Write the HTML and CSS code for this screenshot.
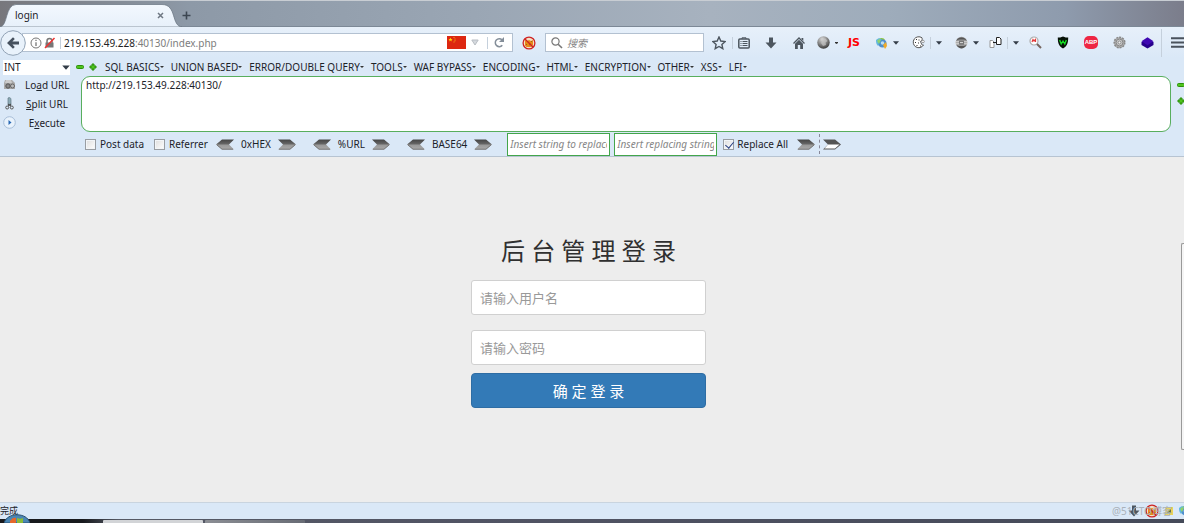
FILE: index.html
```html
<!DOCTYPE html>
<html lang="zh-CN">
<head>
<meta charset="utf-8">
<title>login</title>
<link rel="stylesheet" href="styles.css">
</head>
<body>
<svg class="defs" width="0" height="0" aria-hidden="true">
  <defs>
    <linearGradient id="metal" x1="0" y1="0" x2="0" y2="1"><stop offset="0" stop-color="#444"/><stop offset=".45" stop-color="#666"/><stop offset=".55" stop-color="#999"/><stop offset="1" stop-color="#aaa"/></linearGradient>
    <radialGradient id="ball" cx=".4" cy=".25" r=".8"><stop offset="0" stop-color="#ddd"/><stop offset=".5" stop-color="#888"/><stop offset="1" stop-color="#333"/></radialGradient>
    <linearGradient id="tabfill" x1="0" y1="0" x2="0" y2="1"><stop offset="0" stop-color="#f3f8fe"/><stop offset="1" stop-color="#e7f0fa"/></linearGradient>
    <symbol id="arrow-right" viewBox="0 0 18 11"><path d="M0 .5h12l6 5-6 5H0l5-5z" fill="url(#metal)"/><path d="M1 10.2h11l5-4.2" stroke="#777" fill="none"/></symbol>
    <symbol id="arrow-left" viewBox="0 0 18 11"><path d="M18 .5H6L0 5.500l6 5h12l-5-5z" fill="url(#metal)"/><path d="M17 10.200H6L1 6" stroke="#777" fill="none"/></symbol>
    <symbol id="arrow-hollow" viewBox="0 0 18 11"><path d="M0 .5h12l6 5-6 5H0l5-5z" fill="#555"/><path d="M5 5.500h11.500l-4.500 4H1.500z" fill="#fff"/></symbol>
    <symbol id="minus" viewBox="0 0 8 8"><rect x=".5" y="2.500" width="7" height="3" rx="1" fill="#4fc51d" stroke="#2c8f0c"/></symbol>
    <symbol id="plus" viewBox="0 0 8 8"><path d="M3 1h2v2h2v2H5v2H3V5H1V3h2z" fill="#4fc51d" stroke="#2c8f0c" stroke-linejoin="round"/></symbol>
    <symbol id="caret" viewBox="0 0 6 4"><path d="M0 .3h6L3 3.800z" fill="#333c47"/></symbol>
    <symbol id="blocked" viewBox="0 0 14 14"><circle cx="7" cy="7" r="5.700" fill="#f5dfc4"/><path d="M3 4l2 1 2-1 2 1 2-1v5l-1.500 2h-5L3 9.500z" fill="#e78a17"/><path d="M4 8l1 1M9 5l1 1M7 9l2-1" stroke="#a0601a"/><circle cx="7" cy="7" r="5.900" fill="none" stroke="#cf2222" stroke-width="1.300"/><path d="M3 3l8 8" stroke="#cf2222" stroke-width="1.300"/></symbol>
    <symbol id="download" viewBox="0 0 12 12"><path d="M4 .5h4v5h3.500L6 11.500.5 5.500H4z" fill="#4d565f"/></symbol>
    <symbol id="swirl" viewBox="0 0 12 12"><path d="M1 5c1-5 7-5 8-2L7 5C5 3 4 5 4 7z" fill="#8dc63a"/><path d="M0 3c3-3 5-2 7 1L2 9C0 7 0 5 0 3z" fill="#63b8df"/><circle cx="6.500" cy="6.500" r="4" fill="#4f8fce"/><circle cx="6.500" cy="6" r="1.800" fill="#b8dcef"/><path d="M7 8l3-3 1 4-2 3z" fill="#f1aa28"/><path d="M1 4l2-2 2 1-2 4z" fill="#8fd26d"/></symbol>
  </defs>
</svg>

<header class="tabstrip">
  <div class="tab">
    <svg class="tab-shape" viewBox="0 0 182 23" preserveAspectRatio="none" aria-hidden="true"><path d="M0 23C8 22 5 1 16 .5h146C177 .5 171 22 182 23z" fill="url(#tabfill)" stroke="#67727f" stroke-width=".7"/></svg>
    <span class="tab-title">login</span>
    <button class="plain tab-close" aria-label="Close tab"><svg width="7" height="7" viewBox="0 0 7 7"><path d="M1 1l5 5M6 1L1 6" stroke="#6f7883" stroke-width="1.500"/></svg></button>
  </div>
  <button class="plain new-tab" aria-label="New tab"><svg width="9" height="9" viewBox="0 0 9 9"><path d="M4.500.5v8M.5 4.500h8" stroke="#3c4651" stroke-width="1.600"/></svg></button>
</header>

<nav class="navbar" aria-label="Navigation">
  <button class="plain back" aria-label="Back"><svg width="26" height="26" viewBox="0 0 26 26"><circle cx="13" cy="13" r="12.300" fill="#e9f2fb" stroke="#92a3b6"/><path d="M7 13l6-5.800 1.800 1.800-2.400 2.500H19v3h-6.600l2.400 2.500-1.800 1.800z" fill="#46515e"/></svg></button>
  <div class="urlbar">
    <svg width="12" height="12" viewBox="0 0 12 12"><circle cx="6" cy="6" r="5" fill="none" stroke="#777"/><path d="M6 5.200V9M6 2.800v1.300" stroke="#777" stroke-width="1.300"/></svg>
    <svg width="12" height="12" viewBox="0 0 12 12"><path d="M3 6V4a2.500 2.500 0 015 0v2" fill="none" stroke="#777" stroke-width="1.500"/><rect x="1.500" y="5.500" width="8" height="5" fill="#777"/><path d="M1 11L10.500 1" stroke="#e33" stroke-width="1.500"/></svg>
    <span class="rule"></span>
    <span class="address" role="textbox" aria-label="Address">219.153.49.228<span class="dim">:40130/index.php</span></span>
    <svg width="19" height="13" viewBox="0 0 19 13"><path fill="#dd2710" d="M0 0h19v13H0z"/><path d="M3.500 1.500l.6 1.500h1.500l-1.200 1 .5 1.500-1.400-.9-1.400.9.5-1.500-1.200-1H3z" fill="#fd0"/><path d="M6.500 1h1v1h-1zM7.500 2.500h1v1h-1zM7.500 4.200h1v1h-1zM6.500 5.500h1v1h-1z" fill="#f7a51b"/></svg>
    <svg class="fade-caret" width="8" height="7" viewBox="0 0 8 7"><path d="M.8 1h6.400L4 6z" fill="#d5d9de" stroke="#b8bdc3"/></svg>
    <span class="rule"></span>
    <button class="plain reload" aria-label="Reload"><svg width="11" height="11" viewBox="0 0 11 11"><path d="M8.300 8.300A4 4 0 118 2.700" fill="none" stroke="#848e99" stroke-width="1.500"/><path d="M10 0v5H5z" fill="#848e99"/></svg></button>
  </div>
  <button class="plain blocker" aria-label="Blocked"><svg width="14" height="14"><use href="#blocked"/></svg></button>
  <label class="search">
    <svg width="12" height="12" viewBox="0 0 12 12"><circle cx="4.500" cy="4.500" r="3.600" fill="none" stroke="#777" stroke-width="1.200"/><path d="M7.200 7.200L11 11" stroke="#777" stroke-width="1.600"/></svg>
    <input type="text" placeholder="搜索" aria-label="搜索">
  </label>
  <div class="tools">
    <button class="plain cell short" aria-label="Bookmark"><svg width="14" height="14" viewBox="0 0 14 14"><path d="M7 1l1.800 4 4.300.5-3.200 2.900.9 4.300L7 10.500l-3.800 2.200.9-4.300L.9 5.500 5.200 5z" fill="none" stroke="#4d565f" stroke-width="1.400"/></svg></button>
    <span class="rule"></span>
    <button class="plain cell list" aria-label="Bookmarks list"><svg width="12" height="12" viewBox="0 0 12 12"><path d="M4 2V.8h4V2" fill="none" stroke="#4d565f"/><rect x=".8" y="2" width="10.400" height="9" rx="1" fill="none" stroke="#4d565f" stroke-width="1.500"/><path d="M2.500 4.500h1M4.500 4.500h5M2.500 6.500h1M4.500 6.500h5M2.500 8.500h1M4.500 8.500h5" stroke="#4d565f"/></svg></button>
    <button class="plain cell" aria-label="Downloads"><svg width="12" height="12"><use href="#download"/></svg></button>
    <button class="plain cell" aria-label="Home"><svg width="12" height="12" viewBox="0 0 12 12"><path d="M.5 6.500L6 1l5.500 5.500" fill="none" stroke="#4d565f" stroke-width="1.300"/><path d="M8.500 1h1.800v3l-1.800-1.700zM2 6.800l4-4 4 4V12H7.200V8H4.800v4H2z" fill="#4d565f"/></svg></button>
    <button class="plain cell" aria-label="Proxy"><svg width="13" height="13" viewBox="0 0 13 13"><circle cx="6.500" cy="6.500" r="6.200" fill="url(#ball)"/><path d="M3.500 3l2 1.500L4 7l2 3 3-1-.5-2.500L10.500 5 8.500 2.500z" fill="#c4c4c4" opacity=".7"/></svg><svg width="3" height="2" viewBox="0 0 3 2"><path d="M0 0h3v1L1.500 2 0 1z" fill="#333"/></svg></button>
    <button class="plain cell short js">JS</button>
    <button class="plain cell wide" aria-label="Profiles"><svg width="12" height="12"><use href="#swirl"/></svg><svg width="6" height="4"><use href="#caret"/></svg></button>
    <button class="plain cell wide" aria-label="Cookies"><svg width="13" height="13" viewBox="0 0 13 13"><path d="M10 1.800A5.500 5.500 0 1011.500 9c-2 0-2.500-1-2-2-1.500-.5-1.300-2 0-2.300.7-.5.900-1.700.5-2.900z" fill="#fff" stroke="#555"/><path d="M4 3h1v1H4zM6.500 3.500h1v1h-1zM3 6h1v1H3zM6 6.500h1v1H6zM4.500 9h1v1h-1zM8 9.500h1v1H8z" fill="#333"/><circle cx="11" cy="5.500" r="1.300" fill="#fff" stroke="#666" stroke-width=".6"/></svg><span class="rule"></span><svg width="6" height="4"><use href="#caret"/></svg></button>
    <button class="plain cell wide" aria-label="User agent"><svg width="13" height="13" viewBox="0 0 13 13"><circle cx="6.500" cy="6.500" r="5.800" fill="#999"/><path d="M1.500 4.500C3 .5 10 .5 11.500 4.500L9 3.500H4zM1.500 9C4 13.500 9 13.500 11.500 9L9 10H4z" fill="#555"/><path d="M0 5.800h13M0 7.800h13" stroke="#ddd"/><path d="M4 4.700h5v4H4z" fill="#777"/><path d="M5 6.600h3" stroke="#ddd"/></svg><svg width="6" height="4"><use href="#caret"/></svg></button>
    <button class="plain cell trio" aria-label="Compare"><svg width="13" height="13" viewBox="0 0 13 13"><path d="M1 4.500h2.500l1.500 1.500v5.500H1z" fill="#fff" stroke="#999"/><path d="M7.500 1.500h3L12 3v5.500H7.500z" fill="#fff" stroke="#222"/><path d="M4 6.500h4" stroke="#222"/></svg><span class="rule"></span><svg width="6" height="4"><use href="#caret"/></svg></button>
    <button class="plain cell" aria-label="Inspect"><svg width="13" height="13" viewBox="0 0 13 13"><circle cx="5" cy="5" r="4" fill="#fff" stroke="#aaa" stroke-width="1.200"/><path d="M3 6l1-2.500L5 5l1.500-1.500L6.500 6" fill="none" stroke="#e23b3b" stroke-width="1.200"/><path d="M8 8l4 4" stroke="#75655e" stroke-width="2"/></svg></button>
    <button class="plain cell" aria-label="Shield"><svg width="12" height="13" viewBox="0 0 12 13"><path d="M6 .5c2 1 3.500 1 5.200 1 0 5-.8 8.500-5.200 11C1.600 10 .8 6.500.8 1.500 2.500 1.500 4 1.500 6 .5z" fill="#071207"/><path d="M2.700 4l1.500 4L6 5l1.800 3 1.500-4" fill="none" stroke="#15db24" stroke-width="1.400"/></svg></button>
    <button class="plain cell abp"><span>ABP</span></button>
    <button class="plain cell" aria-label="Settings"><svg width="13" height="13" viewBox="0 0 13 13"><circle cx="6.500" cy="6.500" r="5.300" fill="#aaa" stroke="#888" stroke-width="1.500" stroke-dasharray="2 1"/><circle cx="6.500" cy="6.500" r="3.400" fill="#ccc" stroke="#888"/><circle cx="6.500" cy="6.500" r="1.500" fill="#eee" stroke="#888"/></svg></button>
    <button class="plain cell" aria-label="Layers"><svg width="13" height="12" viewBox="0 0 13 12"><path d="M.5 5h12v3L6.500 11.500.5 8z" fill="#26008c"/><path d="M6.500.3l6 4-6 4-6-4z" fill="#3f08b2"/></svg></button>
    <span class="rule tall"></span>
    <button class="plain menu-button" aria-label="Menu"><svg width="13" height="11" viewBox="0 0 13 11"><path d="M0 1.200h13M0 5.500h13M0 9.800h13" stroke="#4a525c" stroke-width="2"/></svg></button>
  </div>
</nav>

<section class="hackbar" aria-label="HackBar">
  <div class="menus">
    <div class="type"><select aria-label="Type"><option>INT</option></select><svg width="8" height="5"><use href="#caret"/></svg></div>
    <button class="plain step" aria-label="Less"><svg width="8" height="8"><use href="#minus"/></svg></button>
    <button class="plain step" aria-label="More"><svg width="8" height="8"><use href="#plus"/></svg></button>
    <div class="menu-list">
      <button class="plain">SQL BASICS</button><button class="plain">UNION BASED</button><button class="plain">ERROR/DOUBLE QUERY</button><button class="plain">TOOLS</button><button class="plain">WAF BYPASS</button><button class="plain">ENCODING</button><button class="plain">HTML</button><button class="plain">ENCRYPTION</button><button class="plain">OTHER</button><button class="plain">XSS</button><button class="plain">LFI</button>
    </div>
  </div>
  <div class="editor">
    <div class="actions">
      <button class="plain"><svg width="13" height="13" viewBox="0 0 13 13"><path d="M2 2h7l3 3v6H1V5z" fill="#aaa"/><path d="M3 2h5l1 3H2z" fill="#ccc"/><circle cx="5" cy="8" r="2.200" fill="#888" stroke="#555"/><circle cx="9.500" cy="8" r="2" fill="#bbb" stroke="#666"/></svg><span>Lo<u>a</u>d URL</span></button>
      <button class="plain"><svg width="13" height="13" viewBox="0 0 13 13"><path d="M5 1c2-1 3 0 3 2v5H5z" fill="#8caab5" stroke="#627a85" stroke-width=".7"/><path d="M5 7l3 2M8 7L5 9" stroke="#444"/><circle cx="4.200" cy="10.500" r="1.500" fill="none" stroke="#555"/><circle cx="8.800" cy="10.500" r="1.500" fill="none" stroke="#555"/></svg><span><u>S</u>plit URL</span></button>
      <button class="plain"><svg width="13" height="13" viewBox="0 0 13 13"><circle cx="6.500" cy="6.500" r="5.800" fill="#e8f2fc" stroke="#a7bdd7"/><path d="M5.500 4l3 2.500-3 2.500z" fill="#2869b5"/></svg><span>E<u>x</u>ecute</span></button>
    </div>
    <textarea aria-label="URL" spellcheck="false">http://219.153.49.228:40130/</textarea>
    <div class="side">
      <svg width="8" height="8"><use href="#minus"/></svg>
      <svg width="8" height="8"><use href="#plus"/></svg>
    </div>
  </div>
  <div class="options">
    <label class="check post"><input type="checkbox"><span>Post data</span></label>
    <label class="check referrer"><input type="checkbox"><span>Referrer</span></label>
    <div class="codec"><svg width="18" height="11"><use href="#arrow-left"/></svg><span>0xHEX</span><svg width="18" height="11"><use href="#arrow-right"/></svg></div>
    <div class="codec"><svg width="18" height="11"><use href="#arrow-left"/></svg><span>%URL</span><svg width="18" height="11"><use href="#arrow-right"/></svg></div>
    <div class="codec"><svg width="18" height="11"><use href="#arrow-left"/></svg><span>BASE64</span><svg width="18" height="11"><use href="#arrow-right"/></svg></div>
    <div class="replace">
      <input type="text" placeholder="Insert string to replace" aria-label="Insert string to replace">
      <input type="text" placeholder="Insert replacing string" aria-label="Insert replacing string">
    </div>
    <label class="check all"><input type="checkbox" checked><span>Replace All</span></label>
    <svg width="18" height="11"><use href="#arrow-right"/></svg>
    <span class="dashes"></span>
    <svg width="18" height="11"><use href="#arrow-hollow"/></svg>
  </div>
</section>

<main class="page">
  <form class="login">
    <h1>后 台 管 理 登 录</h1>
    <input type="text" placeholder="请输入用户名" aria-label="请输入用户名">
    <input type="password" placeholder="请输入密码" aria-label="请输入密码">
    <button type="button">确 定 登 录</button>
  </form>
  <span class="scroll-thumb"></span>
</main>

<footer>
  <div class="status">
    <span class="state">完成</span>
    <div class="addons">
      <span class="watermark">@51CTO博客</span>
      <svg width="12" height="12"><use href="#download"/></svg>
      <svg width="14" height="14"><use href="#blocked"/></svg>
      <svg width="10" height="10" viewBox="0 0 10 10"><path d="M1 1h8v8H1z" fill="#ead25c"/><path d="M3 7l4-4v4z" fill="#66724a"/></svg>
      <svg class="edge" width="12" height="12"><use href="#swirl"/></svg>
    </div>
  </div>
  <div class="taskbar">
    <svg class="orb" width="26" height="9" viewBox="0 0 26 9" aria-hidden="true"><path d="M0 9C3-2 23-2 26 9z" fill="#4a86b4" stroke="#284f70"/><path d="M6 7c2-3 4-4 6-3v5H6z" fill="#e5672a"/><path d="M13 4c3 1 4 1 6 0v5h-6z" fill="#8bbb38"/></svg>
    <span class="task light"></span><span class="task"></span>
  </div>
</footer>
</body>
</html>
```
FILE: styles.css
```css
* { box-sizing: border-box; }
body {
  margin: 0;
  min-height: 100vh;
  display: flex;
  flex-direction: column;
  overflow: hidden;
  background: #ededed;
  color: #1c2229;
  font: 10px/14px "Noto Sans", "Noto Sans CJK SC", sans-serif;
}
svg { flex: none; display: block; }
.defs { position: absolute; }
button, input, select, textarea { font: inherit; color: inherit; margin: 0; }
.plain { border: 0; padding: 0; background: none; white-space: nowrap; }
.rule { flex: none; width: 1px; height: 12px; background: #c5d0dc; }

/* Tabs */
.tabstrip {
  display: flex;
  align-items: flex-end;
  height: 27px;
  border-bottom: 1px solid #7c8896;
  background: linear-gradient(to right, #77777c 0, #8d99a7 16%, #9aa6b4 40%, #a7b2bf 60%, #9eacbb 75%, #8e9bad 90%, #7b7d8b 100%);
  border-top: 1px solid #c8cdd3;
}
.tab {
  position: relative;
  display: flex;
  align-items: center;
  justify-content: space-between;
  width: 182px;
  height: 22px;
  padding: 0 18px 0 15px;
}
.tab-shape { position: absolute; inset: 0; width: 100%; height: 23px; }
.tab-title, .tab-close { position: relative; }
.new-tab { align-self: center; padding-top: 4px; }

/* Navigation */
.navbar {
  display: flex;
  align-items: center;
  height: 31px;
  background: linear-gradient(#e7f0fa, #dae8f7);
}
.back { z-index: 1; }
.urlbar {
  flex: 1;
  display: flex;
  align-items: center;
  gap: 2px;
  height: 19px;
  margin-left: -4px;
  padding: 0 7px;
  border: 1px solid #b3c1d1;
  background: #fff;
}
.urlbar .rule { margin: 0 1px 0 2px; }
.address { flex: 1; color: #222; }
.dim { color: #7d7d7d; }
.fade-caret { margin: 0 4px 0 3px; }
.reload { margin-left: 3px; }
.blocker { width: 32px; display: flex; justify-content: center; }
.search {
  display: flex;
  align-items: center;
  gap: 4px;
  width: 159px;
  height: 19px;
  padding: 0 5px;
  border: 1px solid #b3c1d1;
  background: #fff;
}
.search input { flex: 1; min-width: 0; padding: 0; border: 0; background: none; font-style: italic; outline: 0; }
.tools { display: flex; align-items: center; padding-left: 2px; }
.cell { display: flex; align-items: center; justify-content: center; gap: 5px; width: 28px; }
.short { width: 26px; }
.list { width: 24px; padding-right: 2px; }
.wide { width: 40px; }
.trio { width: 34px; }
.js { color: #f00; font: bold 11px/14px "DejaVu Sans", sans-serif; }
.abp span {
  width: 14px;
  height: 13px;
  border-radius: 5px;
  background: #ee2643;
  color: #fff;
  font: bold 6px/13px "Liberation Sans", sans-serif;
}
.tall { height: 28px; }
.menu-button { width: 22px; padding-left: 9px; overflow: hidden; }

/* HackBar */
.hackbar { background: #dae8f7; border-bottom: 1px solid #b7c4d2; }
.menus { display: flex; align-items: center; height: 18px; padding-left: 3px; }
.type { position: relative; width: 67px; height: 15px; margin-right: 6px; }
.type select { width: 100%; height: 100%; padding: 0 1px; border: 0; border-radius: 0; appearance: none; background: #fff; }
.type svg { position: absolute; right: 0; top: 5px; pointer-events: none; }
.step { width: 13px; }
.menu-list { display: flex; gap: 6px; padding-left: 3px; }
.menu-list button { display: flex; align-items: center; }
.menu-list button::after { content: ""; border: 2px solid transparent; border-top: 2px solid #333; border-bottom: 0; }
.menu-list button + button { padding-left: 1px; }
.editor { display: flex; }
.actions { width: 81px; display: flex; flex-direction: column; gap: 4px; padding-top: 1px; }
.actions button { display: flex; align-items: center; gap: 9px; padding-left: 3px; }
.actions button span { width: 44px; padding-top: 1px; text-align: center; }
.actions u { text-underline-offset: 1px; }
.editor textarea {
  flex: 1;
  height: 56px;
  padding: 1px 4px;
  border: 1px solid #58ae5e;
  border-radius: 9px;
  background: #fff;
  resize: none;
  outline: 0;
}
.side { width: 13px; padding: 5px 0 0 6px; display: flex; flex-direction: column; gap: 8px; overflow: hidden; }
.options { display: flex; align-items: center; height: 24px; padding-left: 85px; }
.check { display: flex; align-items: center; gap: 4px; white-space: nowrap; }
.check input {
  appearance: none;
  width: 11px;
  height: 11px;
  border: 1px solid #999da2;
  background: linear-gradient(135deg, #ddd, #fff);
  outline: 1px solid #f2f5f8;
  outline-offset: -2px;
}
.check input:checked { position: relative; }
.check input:checked::after {
  content: "";
  position: absolute;
  left: 3px;
  top: 0;
  width: 4px;
  height: 7px;
  border: solid #263f83;
  border-width: 0 1px 1px 0;
  transform: rotate(40deg);
}
.post { width: 69px; }
.referrer { width: 62px; }
.codec { display: flex; align-items: center; gap: 7px; margin-right: 17px; }
.replace { display: flex; gap: 4px; margin-right: 6px; margin-left: -2px; }
.replace input { width: 103px; height: 23px; padding: 0 2px; border: 1px solid #43a54b; border-radius: 0; background: #fff; font-style: italic; }
.replace input::placeholder, .search input::placeholder { color: #868686; opacity: 1; }
.all { width: 74px; gap: 3px; }
.dashes { height: 20px; margin: 0 3px 0 4px; border-left: 1px dashed #889; }

/* Login page */
.page { flex: 1; display: flex; justify-content: center; position: relative; padding: 78px 7px 0 0; }
.login { width: 235px; display: flex; flex-direction: column; }
.login h1 { margin: 0 0 13px; color: #303030; font-size: 24px; line-height: 32px; font-weight: 400; text-align: center; white-space: nowrap; }
.login input {
  height: 35px;
  margin-bottom: 15px;
  padding: 0 8px;
  border: 1px solid #d0d0d0;
  border-radius: 3px;
  background: #fff;
  font-size: 13px;
}
.login input[type="password"] { margin-bottom: 8px; }
.login input::placeholder { color: #999; opacity: 1; }
.login button { height: 35px; border: 1px solid #2e6da4; border-radius: 4px; background: #337ab7; color: #fff; font-size: 15px; }
.scroll-thumb { position: absolute; right: 0; top: 25%; width: 3px; height: 60%; border: 1px solid #999; border-right: 0; border-radius: 2px 0 0 2px; background: #f5f5f5; }

/* Status bar and taskbar */
.status { display: flex; align-items: center; justify-content: space-between; height: 17px; border-top: 1px solid #c9d4df; background: #dae8f7; }
.state { font-size: 9px; }
.addons { display: flex; align-items: center; gap: 5px; overflow: hidden; position: relative; height: 16px; padding-left: 16px; }
.watermark { position: absolute; left: 0; top: 1px; color: #aab2ba; white-space: nowrap; }
.edge { margin-right: -7px; }
.taskbar { position: relative; display: flex; gap: 2px; height: 4px; padding-left: 103px; background: linear-gradient(to right, #17191d 0, #17191d 7%, #555965 10%, #515464 40%, #454a59 100%); }
.orb { position: absolute; left: 4px; bottom: 0; }
.task { width: 100px; margin-top: 1px; border-radius: 1px 1px 0 0; background: linear-gradient(to right, #8b8e94, #686c75); }
.light { background: #d2d4d7; }
```
